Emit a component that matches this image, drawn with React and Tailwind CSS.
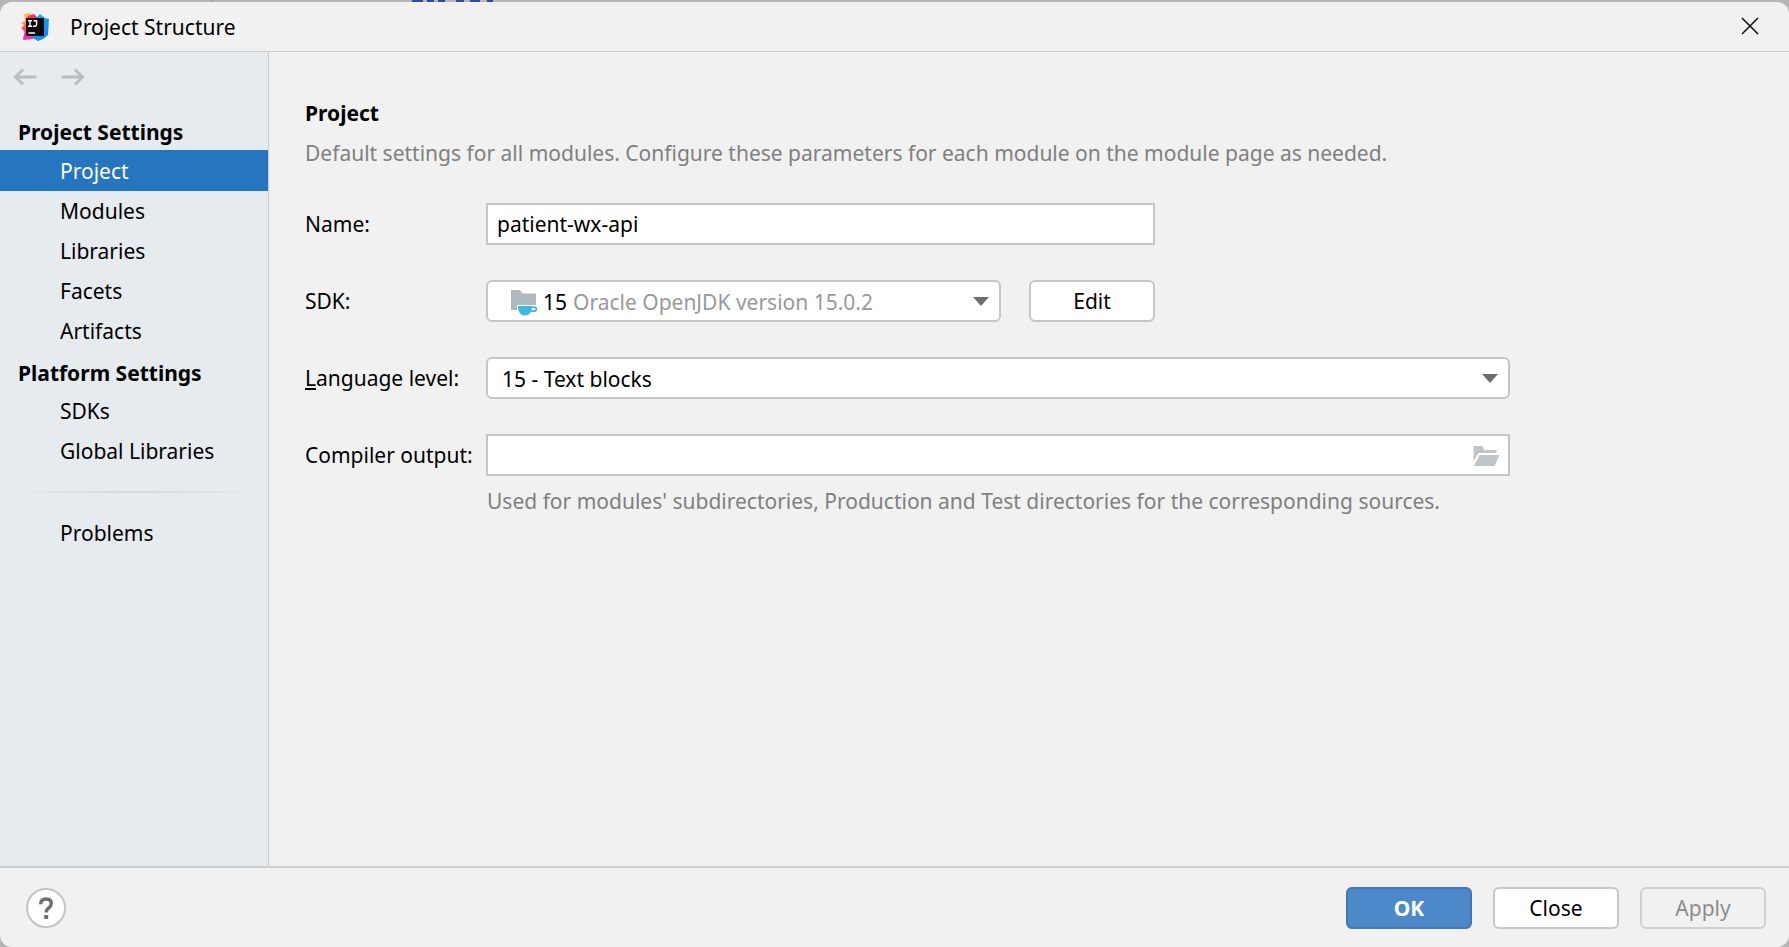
import React from "react";

const FOCUS = "focus:outline-none focus-visible:ring-2 focus-visible:ring-[#97c3f3]";

function AppLogo() {
  return (
    <svg className="size-7 shrink-0" viewBox="0 0 28 28" aria-hidden="true">
      <defs>
        <linearGradient id="warm" x1="0" y1="0" x2="0.3" y2="1">
          <stop offset="0" stopColor="#fdd34a" />
          <stop offset="0.4" stopColor="#fda04a" />
          <stop offset="0.65" stopColor="#fb4a50" />
          <stop offset="1" stopColor="#ff2d90" />
        </linearGradient>
        <linearGradient id="cool" x1="0" y1="0" x2="1" y2="1">
          <stop offset="0" stopColor="#12c3f5" />
          <stop offset="1" stopColor="#087cfa" />
        </linearGradient>
      </defs>
      <path d="M3 1 L9 0 L11 5 L6 8 L6 24 L2 26 L4 19 L0 15 L3 12 L0 10 L4 8 Z" fill="url(#warm)" />
      <path d="M7 3 L13 1 L16 4 L17 8 L5 9 Z" fill="#fb2f5e" />
      <path d="M15 5 L19 1 L24 5 L28 6 L27 22 L22 26 L17 28 L12 25 L14 8 Z" fill="url(#cool)" />
      <path d="M2 27 L4 17 L10 22 L15 24 L12 26 Z" fill="#ff2db4" />
      <path d="M10 24 L16 22 L18 28 Z" fill="#1698f8" />
      <rect x="5" y="5" width="18" height="18" fill="#120508" />
      <path d="M7 7.8 H11 M7 13.2 H11 M9 7.8 V13.2 M12.5 7.8 H15.6 V11.6 Q15.6 13.2 14 13.2 H12" fill="none" stroke="#fff" strokeWidth="1.4" />
      <path d="M7.5 20 H14" stroke="#fff" strokeWidth="1.7" />
    </svg>
  );
}

function Arrow({ back }) {
  return (
    <svg className="h-[18px] w-6" viewBox="0 0 24 18" fill="none" stroke="#bdbdbd" strokeWidth="3" aria-hidden="true">
      {back ? <path d="M23.5 9 H3 M10 1.5 L2.5 9 L10 16.5" /> : <path d="M0.5 9 H21 M14 1.5 L21.5 9 L14 16.5" />}
    </svg>
  );
}

function Caret() {
  return (
    <svg className="pointer-events-none absolute right-3 top-[17px] h-[9px] w-4" viewBox="0 0 16 9" aria-hidden="true">
      <path d="M0 0 H16 L8 9 Z" fill="#6e6e6e" />
    </svg>
  );
}

function SdkIcon() {
  return (
    <svg className="size-7" viewBox="0 0 28 28" aria-hidden="true">
      <path d="M1 2 H9.5 L13 5.5 H26 V17 H7 V22 H1 Z" fill="#afb9c0" />
      <path d="M8 18 H22 Q22 27.5 15 27.5 Q8 27.5 8 18 Z" fill="#40b6e0" />
      <path d="M21 19.2 H24.5 Q26.3 19.2 26.3 21 Q26.3 23.2 24 23.2 H20.5" fill="none" stroke="#40b6e0" strokeWidth="1.8" />
    </svg>
  );
}

function FolderIcon() {
  return (
    <svg className="h-5 w-[27px]" viewBox="0 0 27 20" aria-hidden="true">
      <path d="M0.5 0 H9.5 L11 4 H23.5 V7 H5.5 L0.5 15.5 Z" fill="#bfc6cb" />
      <path d="M6.5 9 H26.5 L21.5 20 H0.8 Z" fill="#bfc6cb" />
    </svg>
  );
}

function NavItem({ children, active }) {
  return (
    <a
      href="#"
      aria-current={active ? "page" : undefined}
      className={
        active
          ? "flex h-[41px] items-center bg-[#2675bf] pl-15 text-white"
          : "flex h-10 items-center pl-15 text-black"
      }
    >
      {children}
    </a>
  );
}

function Sidebar() {
  return (
    <aside className="w-[269px] shrink-0 border-r border-[#c9cccf] bg-[#e6ebef]">
      <div className="flex gap-6 px-[13px] pt-4">
        <button type="button" aria-label="Back" disabled><Arrow back /></button>
        <button type="button" aria-label="Forward" disabled><Arrow /></button>
      </div>
      <nav className="pt-6" aria-label="Settings">
        <h2 className="flex h-10 items-center pl-[18px] pt-1 font-bold">Project Settings</h2>
        <NavItem active>Project</NavItem>
        <NavItem>Modules</NavItem>
        <NavItem>Libraries</NavItem>
        <NavItem>Facets</NavItem>
        <NavItem>Artifacts</NavItem>
        <h2 className="flex h-10 items-center pl-[18px] pt-1 font-bold">Platform Settings</h2>
        <NavItem>SDKs</NavItem>
        <NavItem>Global Libraries</NavItem>
        <hr className="mx-3 my-5 h-[2px] border-0 bg-linear-to-r from-transparent via-[#d6d8da] to-transparent" />
        <NavItem>Problems</NavItem>
      </nav>
    </aside>
  );
}

export default function App() {
  return (
    <div className="flex min-h-screen flex-col bg-[#b5b5b5] font-['Noto_Sans','Open_Sans',sans-serif] text-[21px] leading-7 text-black">
      <svg className="h-[2px] w-full shrink-0" aria-hidden="true">
        <path d="M412 1 H423 M427 1 H434 M438 1 H445 M456 1 H464 M470 1 H480 M487 1 H493" stroke="#2f4aa0" strokeWidth="2" />
        <path d="M213 0 V2" stroke="#999" />
      </svg>
      <div className="flex flex-1 flex-col overflow-hidden rounded-xl bg-[#f1f1f1]">
        <header className="flex h-[50px] shrink-0 items-center border-b border-[#cfcfcf] pl-[21px] pr-[29px]">
          <AppLogo />
          <h1 className="ml-[21px] flex-1">Project Structure</h1>
          <button type="button" aria-label="Close window" className={FOCUS}>
            <svg className="size-5" viewBox="0 0 20 20" stroke="#111" strokeWidth="1.6" aria-hidden="true">
              <path d="M2 1 L18 17 M18 1 L2 17" />
            </svg>
          </button>
        </header>
        <div className="flex flex-1">
          <Sidebar />
          <main className="min-w-0 flex-1 pl-9 pr-[279px] pt-[47px]">
            <h2 className="font-bold">Project</h2>
            <p className="mt-3 whitespace-nowrap text-[#808080]">
              Default settings for all modules. Configure these parameters for each module on the module page as needed.
            </p>
            <form className="mt-9 grid grid-cols-[181px_1fr] items-center gap-y-[35px]" onSubmit={(e) => e.preventDefault()}>
              <label htmlFor="name">Name:</label>
              <input
                id="name"
                defaultValue="patient-wx-api"
                className={`h-[42px] w-full max-w-[669px] border-2 border-[#c6c6c6] bg-white px-[9px] ${FOCUS}`}
              />

              <label htmlFor="sdk">SDK:</label>
              <div className="flex max-w-[669px] gap-7">
                <div className="relative flex-1">
                  <select
                    id="sdk"
                    className={`h-[42px] w-full appearance-none rounded-md border-2 border-[#c6c6c6] bg-white pl-[85px] pr-10 pt-px text-[#999] ${FOCUS}`}
                  >
                    <option>Oracle OpenJDK version 15.0.2</option>
                  </select>
                  <span className="pointer-events-none absolute left-6 top-2 flex h-7 items-center gap-[5px]">
                    <SdkIcon />
                    15
                  </span>
                  <Caret />
                </div>
                <button type="button" className={`h-[42px] w-[126px] rounded-md border-2 border-[#c6c6c6] bg-white ${FOCUS}`}>
                  Edit
                </button>
              </div>

              <label htmlFor="level"><span className="underline underline-offset-2">L</span>anguage level:</label>
              <div className="relative">
                <select
                  id="level"
                  className={`h-[42px] w-full appearance-none rounded-md border-2 border-[#c6c6c6] bg-white pl-[14px] pr-10 pt-px text-black ${FOCUS}`}
                >
                  <option>15 - Text blocks</option>
                </select>
                <Caret />
              </div>

              <label htmlFor="output" className="whitespace-nowrap">Compiler output:</label>
              <div className="relative">
                <input id="output" className={`block h-[42px] w-full border-2 border-[#c6c6c6] bg-white pl-2 pr-12 ${FOCUS}`} />
                <button type="button" aria-label="Browse" className="absolute right-[10px] top-3">
                  <FolderIcon />
                </button>
              </div>
            </form>
            <p className="ml-[182px] mt-[11px] whitespace-nowrap text-[#808080]">
              Used for modules' subdirectories, Production and Test directories for the corresponding sources.
            </p>
          </main>
        </div>
        <footer className="flex h-[81px] shrink-0 items-center gap-[21px] border-t-2 border-[#cfcfcf] pl-[26px] pr-[23px]">
          <button
            type="button"
            aria-label="Help"
            className={`mr-auto flex size-10 items-center justify-center rounded-full border-2 border-[#c4c4c4] bg-white ${FOCUS}`}
          >
            <svg className="h-[22px] w-4" viewBox="0 0 16 22" aria-hidden="true">
              <path d="M2.7 7.2 Q2.7 2 8 2 Q13.3 2 13.3 6.6 Q13.3 9 10.8 10.8 Q8.2 12.6 8.2 15.6" fill="none" stroke="#6e6e6e" strokeWidth="3.4" />
              <rect x="6.2" y="18" width="4" height="4" fill="#6e6e6e" />
            </svg>
          </button>
          <button type="button" className={`h-[42px] w-[126px] rounded-md border-2 border-[#3f77b8] bg-[#4d89c9] font-bold text-white ${FOCUS}`}>
            OK
          </button>
          <button type="button" className={`h-[42px] w-[126px] rounded-md border-2 border-[#c6c6c6] bg-white ${FOCUS}`}>
            Close
          </button>
          <button type="button" disabled className="h-[42px] w-[126px] rounded-md border-2 border-[#d0d0d0] text-[#8c8c8c]">
            Apply
          </button>
        </footer>
      </div>
    </div>
  );
}
